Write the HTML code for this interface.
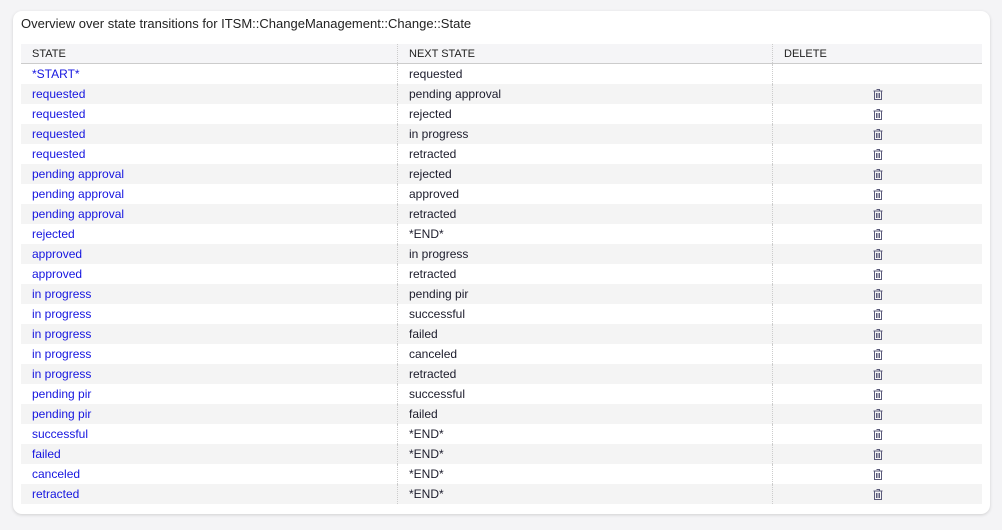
<!DOCTYPE html>
<html><head><style>
body{margin:0;background:#f4f4f6;font-family:"Liberation Sans",sans-serif;font-size:12px;color:#1c1c2c;}
.card{position:absolute;left:13px;top:11px;width:977px;height:503px;background:#fff;border-radius:9px;box-shadow:0 1px 3px rgba(0,0,0,.15);}
.title{position:absolute;left:8px;top:5px;font-size:13px;color:#222;}
table{position:absolute;left:8px;top:33px;width:961px;border-collapse:collapse;}
th{background:#f5f5f7;height:19px;text-align:left;font-weight:normal;font-size:11px;padding:0 0 0 11px;border-bottom:1px solid #ccc;color:#222;}
td{height:20px;padding:0 0 0 11px;}
tr:nth-child(odd) td{background:#f4f4f4;}
th:nth-child(1),td:nth-child(1){width:365px;border-right:1px dotted #ccc;}
th:nth-child(2),td:nth-child(2){width:363px;border-right:1px dotted #ccc;}
td:nth-child(1){color:#1515e0;}
td:nth-child(3){text-align:center;padding:0;}
svg{vertical-align:middle}
</style></head><body>
<div class="card"><div class="title">Overview over state transitions for ITSM::ChangeManagement::Change::State</div>
<table>
<tr><th>STATE</th><th>NEXT STATE</th><th>DELETE</th></tr>
<tr><td>*START*</td><td>requested</td><td></td></tr>
<tr><td>requested</td><td>pending approval</td><td>T</td></tr>
<tr><td>requested</td><td>rejected</td><td>T</td></tr>
<tr><td>requested</td><td>in progress</td><td>T</td></tr>
<tr><td>requested</td><td>retracted</td><td>T</td></tr>
<tr><td>pending approval</td><td>rejected</td><td>T</td></tr>
<tr><td>pending approval</td><td>approved</td><td>T</td></tr>
<tr><td>pending approval</td><td>retracted</td><td>T</td></tr>
<tr><td>rejected</td><td>*END*</td><td>T</td></tr>
<tr><td>approved</td><td>in progress</td><td>T</td></tr>
<tr><td>approved</td><td>retracted</td><td>T</td></tr>
<tr><td>in progress</td><td>pending pir</td><td>T</td></tr>
<tr><td>in progress</td><td>successful</td><td>T</td></tr>
<tr><td>in progress</td><td>failed</td><td>T</td></tr>
<tr><td>in progress</td><td>canceled</td><td>T</td></tr>
<tr><td>in progress</td><td>retracted</td><td>T</td></tr>
<tr><td>pending pir</td><td>successful</td><td>T</td></tr>
<tr><td>pending pir</td><td>failed</td><td>T</td></tr>
<tr><td>successful</td><td>*END*</td><td>T</td></tr>
<tr><td>failed</td><td>*END*</td><td>T</td></tr>
<tr><td>canceled</td><td>*END*</td><td>T</td></tr>
<tr><td>retracted</td><td>*END*</td><td>T</td></tr>
</table></div>
<script>
document.querySelectorAll('td:nth-child(3)').forEach(function(t){if(t.textContent=='T')t.innerHTML='<svg width="10" height="11" viewBox="0 0 10 11"><path d="M3.5 .5h3v1.5M.5 2h9M1.5 2.5v8h7v-8M3.5 4v5M5 4v5M6.5 4v5" fill="none" stroke="#5a5a7a" stroke-width="1"/></svg>';});
</script>
</body></html>
